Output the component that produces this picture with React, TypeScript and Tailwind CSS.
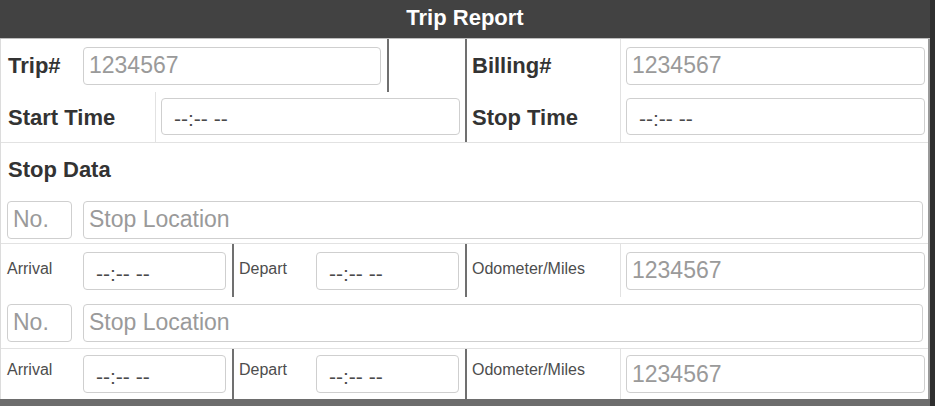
import React from 'react';

const inputBase =
  'h-[38px] rounded-[4px] border border-[#cfcfcf] bg-white px-[5px] text-[23px] text-[#555] outline-none placeholder:text-[#9a9a9a]';

const NumberField: React.FC<{ width: string; placeholder?: string }> = ({ width, placeholder = '1234567' }) => (
  <input className={`${inputBase} ${width}`} placeholder={placeholder} />
);

const TimeField: React.FC<{ width: string; height?: string }> = ({ width, height = 'h-[38px]' }) => (
  <div
    className={`${width} ${height} flex items-center rounded-[4px] border border-[#cfcfcf] bg-white pl-[12px] pt-[5px] text-[21px] leading-none text-[#4a4a4a]`}
  >
    --:-- --
  </div>
);

const BigLabel: React.FC<{ children: React.ReactNode }> = ({ children }) => (
  <span className="text-[22px] font-bold text-[#333]">{children}</span>
);

const SmallLabel: React.FC<{ children: React.ReactNode }> = ({ children }) => (
  <span className="text-[16px] text-[#4d4d4d]">{children}</span>
);

// right half of a row: label cell + input cell
const RightPair: React.FC<{ label: React.ReactNode; field: React.ReactNode; top?: string }> = ({ label, field, top }) => (
  <div className="flex w-[463px] border-l-2 border-[#707070]">
    <div className={`flex w-[154px] border-r border-[#e2e2e2] pl-[5px] ${top ? `items-start ${top}` : 'items-center'}`}>
      {label}
    </div>
    <div className="flex flex-1 items-center pl-[5px]">{field}</div>
  </div>
);

const StopRows: React.FC<{ h1: string; h2: string; pt: string }> = ({ h1, h2, pt }) => (
  <>
    <div className={`flex ${h1} items-center border-b border-[#e2e2e2] pl-[6px]`}>
      <input className={`${inputBase} w-[65px]`} placeholder="No." />
      <input className={`${inputBase} ml-[11px] w-[840px]`} placeholder="Stop Location" />
    </div>
    <div className={`flex ${h2}`}>
      <div className="flex w-[464px]">
        <div className={`w-[82px] pl-[6px] ${pt}`}>
          <SmallLabel>Arrival</SmallLabel>
        </div>
        <div className="flex items-center">
          <TimeField width="w-[143px]" />
        </div>
        <div className={`ml-[6px] w-[84px] border-l-2 border-[#707070] pl-[5px] ${pt}`}>
          <SmallLabel>Depart</SmallLabel>
        </div>
        <div className="flex items-center">
          <TimeField width="w-[143px]" />
        </div>
      </div>
      <RightPair top={pt} label={<SmallLabel>Odometer/Miles</SmallLabel>} field={<NumberField width="w-[299px]" />} />
    </div>
  </>
);

const App: React.FC = () => {
  return (
    <div className="flex h-[406px] w-[935px] bg-[#2f2f2f] font-['Liberation_Sans',Arial,Helvetica,sans-serif]">
      <div className="flex w-[930px] flex-col">
        <div className="flex h-[38px] items-center justify-center bg-[#424242] pb-[4px]">
          <h1 className="text-[22px] font-bold text-white">Trip Report</h1>
        </div>
        <div className="h-px bg-[#bdbdbd]" />

        <div className="flex flex-1 flex-col border-l border-r-2 border-l-[#dcdcdc] border-r-[#9a9a9a] bg-white">
          {/* trip / billing */}
          <div className="flex h-[53px]">
            <div className="flex w-[464px]">
              <div className="flex w-[82px] items-center pl-[7px]">
                <BigLabel>Trip#</BigLabel>
              </div>
              <div className="flex items-center">
                <NumberField width="w-[298px]" />
              </div>
              <div className="ml-[6px] flex-1 border-l-2 border-[#707070]" />
            </div>
            <RightPair label={<BigLabel>Billing#</BigLabel>} field={<NumberField width="w-[299px]" />} />
          </div>

          {/* start / stop time */}
          <div className="flex h-[51px] border-b border-[#e2e2e2]">
            <div className="flex w-[464px]">
              <div className="flex w-[155px] items-center border-r border-[#e2e2e2] pl-[7px]">
                <BigLabel>Start Time</BigLabel>
              </div>
              <div className="flex items-center pl-[5px] pb-[2px]">
                <TimeField width="w-[299px]" height="h-[37px]" />
              </div>
            </div>
            <div className="flex w-[463px] border-l-2 border-[#707070]">
              <div className="flex w-[154px] items-center border-r border-[#e2e2e2] pl-[5px]">
                <BigLabel>Stop Time</BigLabel>
              </div>
              <div className="flex flex-1 items-center pl-[5px] pb-[2px]">
                <TimeField width="w-[299px]" height="h-[37px]" />
              </div>
            </div>
          </div>

          <div className="flex h-[53px] items-center pl-[7px]">
            <BigLabel>Stop Data</BigLabel>
          </div>

          <StopRows h1="h-[48px]" h2="h-[53px]" pt="pt-[13px]" />
          <StopRows h1="h-[52px]" h2="h-[50px]" pt="pt-[9px]" />
        </div>

        <div className="h-[7px] bg-[#6d6d6d]" />
      </div>
    </div>
  );
};

export default App;
